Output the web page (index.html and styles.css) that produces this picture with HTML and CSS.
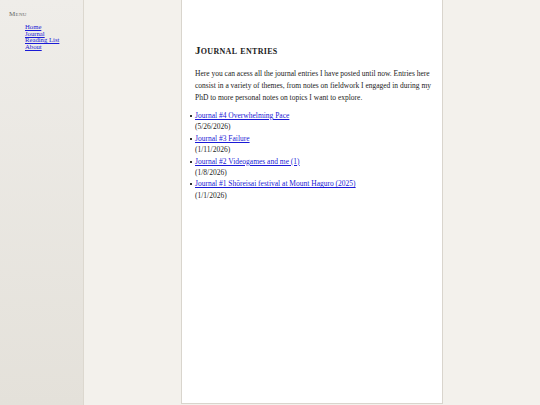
FILE: index.html
```html
<!DOCTYPE html>
<html>
<head>
<meta charset="utf-8">
<link rel="stylesheet" href="styles.css">
</head>
<body>
<div class="layout">
  <nav class="sidebar">
    <div class="menu-title">Menu</div>
    <ul class="menu">
      <li><a href="#">Home</a></li>
      <li><a href="#">Journal</a></li>
      <li><a href="#">Reading List</a></li>
      <li><a href="#">About</a></li>
    </ul>
  </nav>
  <main class="main">
    <article class="page">
      <h1 class="title">Journal entries</h1>
      <p class="intro">Here you can acess all the journal entries I have posted until now. Entries here consist in a variety of themes, from notes on fieldwork I engaged in during my PhD to more personal notes on topics I want to explore.</p>
      <ul class="entries">
        <li><a href="#">Journal #4 Overwhelming Pace</a><br>(5/26/2026)</li>
        <li><a href="#">Journal #3 Failure</a><br>(1/11/2026)</li>
        <li><a href="#">Journal #2 Videogames and me (1)</a><br>(1/8/2026)</li>
        <li><a href="#">Journal #1 Shōreisai festival at Mount Haguro (2025)</a><br>(1/1/2026)</li>
      </ul>
    </article>
  </main>
</div>
</body>
</html>
```

FILE: styles.css
```css
html, body {
  margin: 0;
  padding: 0;
  height: 100%;
}
body {
  font-family: "Liberation Serif", "DejaVu Serif", serif;
  color: #222;
  background: #f3f1ec;
}
.layout {
  display: flex;
  height: 405px;
}
.sidebar {
  width: 84px;
  flex: none;
  background: linear-gradient(to bottom, #efede9, #e4e1da);
  border-right: 1px solid #dcd8cf;
  padding: 10px 0 0 9px;
  box-sizing: border-box;
}
.menu-title {
  font-variant: small-caps;
  font-size: 7px;
  letter-spacing: 0.3px;
  color: #666;
  line-height: 8px;
}
.menu {
  list-style: none;
  margin: 6px 0 0 16px;
  padding: 0;
  font-size: 6.7px;
  line-height: 6.7px;
}
.menu a {
  color: #1a1ad6;
}
.main {
  flex: 1;
  display: flex;
  justify-content: center;
}
.page {
  width: 262px;
  height: 404px;
  box-sizing: border-box;
  background: #fff;
  border: 1px solid #d9d5cd;
  border-top: none;
  padding: 44px 6px 0 13px;
}
.title {
  font-variant: small-caps;
  font-size: 11px;
  font-weight: bold;
  letter-spacing: 0.3px;
  margin: 0 0 12px 0;
  line-height: 12px;
}
.intro {
  font-size: 7.5px;
  line-height: 12px;
  margin: 0 0 6px 0;
}
.entries {
  margin: 0;
  padding: 0;
  list-style: none;
  font-size: 7.5px;
  line-height: 11.4px;
}
.entries li {
  position: relative;
}
.entries li::before {
  content: "";
  position: absolute;
  left: -5px;
  top: 5px;
  width: 2px;
  height: 2px;
  background: #333;
}
.entries a {
  color: #1a1ad6;
}
```
